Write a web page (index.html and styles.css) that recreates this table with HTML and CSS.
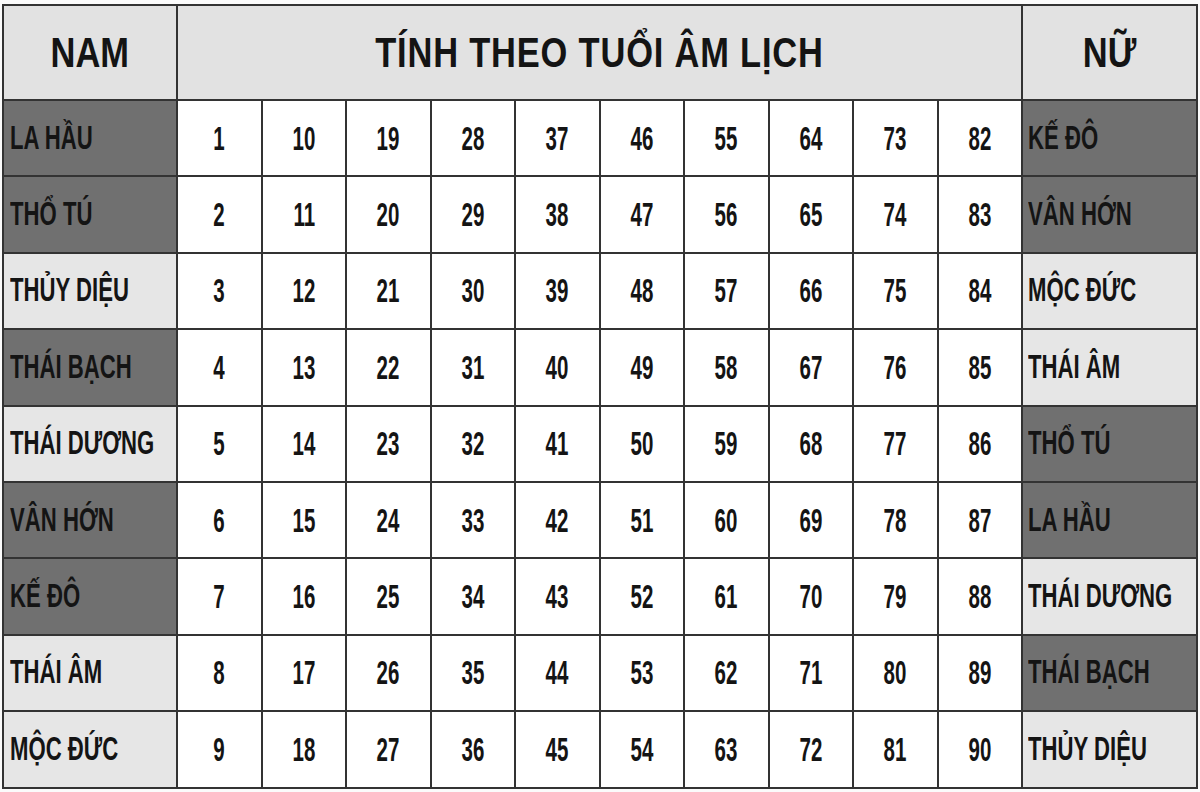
FILE: index.html
```html
<!DOCTYPE html>
<html lang="vi">
<head>
<meta charset="utf-8">
<title>Tính theo tuổi âm lịch</title>
<link rel="stylesheet" href="styles.css">
</head>
<body>
<table class="sao">
  <colgroup>
    <col class="c-name">
    <col class="c-num"><col class="c-num"><col class="c-num"><col class="c-num"><col class="c-num">
    <col class="c-num"><col class="c-num"><col class="c-num"><col class="c-num"><col class="c-num">
    <col class="c-name-r">
  </colgroup>
  <thead>
    <tr>
      <th class="hd"><span class="t">NAM</span></th>
      <th class="hd hd-mid" colspan="10"><span class="t">TÍNH THEO TUỔI ÂM LỊCH</span></th>
      <th class="hd"><span class="t">NỮ</span></th>
    </tr>
  </thead>
  <tbody>
    <tr><td class="nm dark"><span class="t">LA HẦU</span></td><td><span class="t">1</span></td><td><span class="t">10</span></td><td><span class="t">19</span></td><td><span class="t">28</span></td><td><span class="t">37</span></td><td><span class="t">46</span></td><td><span class="t">55</span></td><td><span class="t">64</span></td><td><span class="t">73</span></td><td><span class="t">82</span></td><td class="nm nm-r dark"><span class="t">KẾ ĐÔ</span></td></tr>
    <tr><td class="nm dark"><span class="t">THỔ TÚ</span></td><td><span class="t">2</span></td><td><span class="t">11</span></td><td><span class="t">20</span></td><td><span class="t">29</span></td><td><span class="t">38</span></td><td><span class="t">47</span></td><td><span class="t">56</span></td><td><span class="t">65</span></td><td><span class="t">74</span></td><td><span class="t">83</span></td><td class="nm nm-r dark"><span class="t">VÂN HỚN</span></td></tr>
    <tr><td class="nm light"><span class="t">THỦY DIỆU</span></td><td><span class="t">3</span></td><td><span class="t">12</span></td><td><span class="t">21</span></td><td><span class="t">30</span></td><td><span class="t">39</span></td><td><span class="t">48</span></td><td><span class="t">57</span></td><td><span class="t">66</span></td><td><span class="t">75</span></td><td><span class="t">84</span></td><td class="nm nm-r light"><span class="t">MỘC ĐỨC</span></td></tr>
    <tr><td class="nm dark"><span class="t">THÁI BẠCH</span></td><td><span class="t">4</span></td><td><span class="t">13</span></td><td><span class="t">22</span></td><td><span class="t">31</span></td><td><span class="t">40</span></td><td><span class="t">49</span></td><td><span class="t">58</span></td><td><span class="t">67</span></td><td><span class="t">76</span></td><td><span class="t">85</span></td><td class="nm nm-r light"><span class="t">THÁI ÂM</span></td></tr>
    <tr><td class="nm light"><span class="t">THÁI DƯƠNG</span></td><td><span class="t">5</span></td><td><span class="t">14</span></td><td><span class="t">23</span></td><td><span class="t">32</span></td><td><span class="t">41</span></td><td><span class="t">50</span></td><td><span class="t">59</span></td><td><span class="t">68</span></td><td><span class="t">77</span></td><td><span class="t">86</span></td><td class="nm nm-r dark"><span class="t">THỔ TÚ</span></td></tr>
    <tr><td class="nm dark"><span class="t">VÂN HỚN</span></td><td><span class="t">6</span></td><td><span class="t">15</span></td><td><span class="t">24</span></td><td><span class="t">33</span></td><td><span class="t">42</span></td><td><span class="t">51</span></td><td><span class="t">60</span></td><td><span class="t">69</span></td><td><span class="t">78</span></td><td><span class="t">87</span></td><td class="nm nm-r dark"><span class="t">LA HẦU</span></td></tr>
    <tr><td class="nm dark"><span class="t">KẾ ĐÔ</span></td><td><span class="t">7</span></td><td><span class="t">16</span></td><td><span class="t">25</span></td><td><span class="t">34</span></td><td><span class="t">43</span></td><td><span class="t">52</span></td><td><span class="t">61</span></td><td><span class="t">70</span></td><td><span class="t">79</span></td><td><span class="t">88</span></td><td class="nm nm-r light"><span class="t">THÁI DƯƠNG</span></td></tr>
    <tr><td class="nm light"><span class="t">THÁI ÂM</span></td><td><span class="t">8</span></td><td><span class="t">17</span></td><td><span class="t">26</span></td><td><span class="t">35</span></td><td><span class="t">44</span></td><td><span class="t">53</span></td><td><span class="t">62</span></td><td><span class="t">71</span></td><td><span class="t">80</span></td><td><span class="t">89</span></td><td class="nm nm-r dark"><span class="t">THÁI BẠCH</span></td></tr>
    <tr><td class="nm light"><span class="t">MỘC ĐỨC</span></td><td><span class="t">9</span></td><td><span class="t">18</span></td><td><span class="t">27</span></td><td><span class="t">36</span></td><td><span class="t">45</span></td><td><span class="t">54</span></td><td><span class="t">63</span></td><td><span class="t">72</span></td><td><span class="t">81</span></td><td><span class="t">90</span></td><td class="nm nm-r light"><span class="t">THỦY DIỆU</span></td></tr>
  </tbody>
</table>
</body>
</html>
```

FILE: styles.css
```css
html, body {
  margin: 0;
  padding: 0;
  background: #fbfbfb;
}

body {
  padding: 4px 0 0 2px;
  font-family: "Liberation Sans", Arial, sans-serif;
  color: #141414;
}

.sao {
  width: 1194px;
  table-layout: fixed;
  border-collapse: collapse;
  border: 2px solid #3a3a3a;
}

.c-name { width: 174px; }
.c-num { width: 84.5px; }
.c-name-r { width: 175px; }

.sao th,
.sao td {
  border: 2px solid #333;
  padding: 0;
  text-align: center;
  vertical-align: middle;
  background: #fff;
  font-weight: 700;
  font-size: 25px;
  height: 74.4px;
  overflow: hidden;
  white-space: nowrap;
}

.sao th.hd {
  background: #e2e2e2;
  height: 93px;
  font-size: 42px;
}

.sao th.hd-mid {
  letter-spacing: 1px;
}

.t {
  display: inline-block;
  transform: scale(0.82, 1.34);
}

.sao th.hd .t {
  transform: scale(0.82, 1);
}

.sao td.nm {
  text-align: left;
  padding-left: 6px;
  font-size: 27px;
}

.sao td.nm-r {
  padding-left: 5px;
}

.sao td.nm .t {
  transform: scale(0.82, 1.22);
  transform-origin: left center;
}

.sao td.dark { background: #707070; }
.sao td.light { background: #e6e6e6; }
```
